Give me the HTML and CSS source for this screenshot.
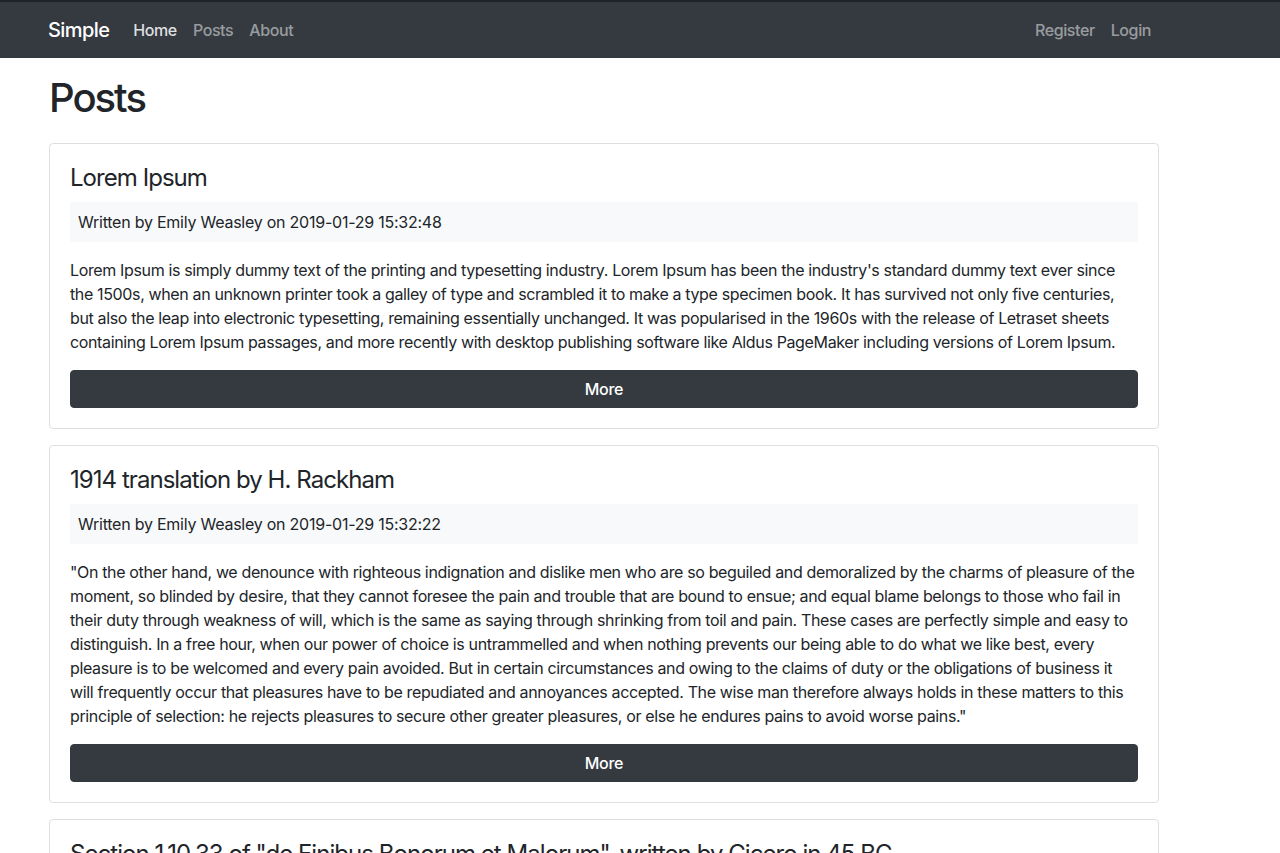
FILE: index.html
```html
<!DOCTYPE html>
<html lang="en">
<head>
<meta charset="utf-8">
<title>Simple</title>
<link rel="stylesheet" href="styles.css">
</head>
<body>
<nav class="navbar">
  <div class="nav-inner">
    <a class="brand" href="#">Simple</a>
    <ul class="nav-list">
      <li><a class="nav-link active" href="#">Home</a></li>
      <li><a class="nav-link" href="#">Posts</a></li>
      <li><a class="nav-link" href="#">About</a></li>
    </ul>
    <ul class="nav-list nav-right">
      <li><a class="nav-link" href="#">Register</a></li>
      <li><a class="nav-link" href="#">Login</a></li>
    </ul>
  </div>
</nav>
<main class="container">
  <h1 class="page-title">Posts</h1>

  <article class="card">
    <h4 class="card-title">Lorem Ipsum</h4>
    <div class="meta">Written by Emily Weasley on 2019-01-29 15:32:48</div>
    <p class="card-text">Lorem Ipsum is simply dummy text of the printing and typesetting industry. Lorem Ipsum has been the industry's standard dummy text ever since the 1500s, when an unknown printer took a galley of type and scrambled it to make a type specimen book. It has survived not only five centuries, but also the leap into electronic typesetting, remaining essentially unchanged. It was popularised in the 1960s with the release of Letraset sheets containing Lorem Ipsum passages, and more recently with desktop publishing software like Aldus PageMaker including versions of Lorem Ipsum.</p>
    <a class="btn" href="#">More</a>
  </article>

  <article class="card">
    <h4 class="card-title">1914 translation by H. Rackham</h4>
    <div class="meta">Written by Emily Weasley on 2019-01-29 15:32:22</div>
    <p class="card-text">"On the other hand, we denounce with righteous indignation and dislike men who are so beguiled and demoralized by the charms of pleasure of the moment, so blinded by desire, that they cannot foresee the pain and trouble that are bound to ensue; and equal blame belongs to those who fail in their duty through weakness of will, which is the same as saying through shrinking from toil and pain. These cases are perfectly simple and easy to distinguish. In a free hour, when our power of choice is untrammelled and when nothing prevents our being able to do what we like best, every pleasure is to be welcomed and every pain avoided. But in certain circumstances and owing to the claims of duty or the obligations of business it will frequently occur that pleasures have to be repudiated and annoyances accepted. The wise man therefore always holds in these matters to this principle of selection: he rejects pleasures to secure other greater pleasures, or else he endures pains to avoid worse pains."</p>
    <a class="btn" href="#">More</a>
  </article>

  <article class="card">
    <h4 class="card-title">Section 1.10.33 of "de Finibus Bonorum et Malorum", written by Cicero in 45 BC</h4>
    <div class="meta">Written by Emily Weasley on 2019-01-29 15:31:57</div>
    <p class="card-text">"At vero eos et accusamus et iusto odio dignissimos ducimus qui blanditiis praesentium voluptatum deleniti atque corrupti quos dolores et quas molestias excepturi sint occaecati cupiditate non provident, similique sunt in culpa qui officia deserunt mollitia animi, id est laborum et dolorum fuga."</p>
    <a class="btn" href="#">More</a>
  </article>
</main>
</body>
</html>
```

FILE: styles.css
```css
* {
  box-sizing: border-box;
}

html, body {
  margin: 0;
  padding: 0;
}

body {
  font-family: Inter, "Liberation Sans", Arial, sans-serif;
  font-size: 16px;
  line-height: 1.5;
  color: #212529;
  background: #fff;
  letter-spacing: -0.3px;
}

a {
  text-decoration: none;
}

.navbar {
  background: #343a40;
  border-top: 2px solid #1f2226;
}

.nav-inner {
  width: 1111px;
  margin-left: 48px;
  height: 56px;
  display: flex;
  align-items: center;
}

.brand {
  color: #fff;
  font-size: 20px;
  line-height: 30px;
  font-weight: 500;
  margin-right: 16px;
  letter-spacing: -0.6px;
}

.nav-list {
  list-style: none;
  margin: 0;
  padding: 0;
  display: flex;
}

.nav-right {
  margin-left: auto;
}

.nav-link {
  display: block;
  padding: 8px;
  color: rgba(255, 255, 255, 0.5);
  font-weight: 500;
  letter-spacing: -0.4px;
}

.nav-link.active {
  color: rgba(255, 255, 255, 0.85);
}

.container {
  width: 1110px;
  margin-left: 49px;
}

.page-title {
  font-size: 40px;
  font-weight: 500;
  line-height: 1.2;
  margin: 16px 0 21px;
  letter-spacing: -2px;
}

.card {
  border: 1px solid rgba(0, 0, 0, 0.125);
  border-radius: 4px;
  padding: 20px;
  margin-bottom: 16px;
  display: flex;
  flex-direction: column;
}

.card-title {
  font-size: 24px;
  font-weight: 400;
  line-height: 1.2;
  margin: 0 0 9px;
  letter-spacing: -0.95px;
}

.meta {
  background: #f8f9fa;
  padding: 8px;
  letter-spacing: -0.24px;
}

.card-text {
  margin: 16px 0;
  letter-spacing: -0.36px;
}

.btn {
  display: block;
  background: #343a40;
  border: 1px solid #343a40;
  color: #fff;
  text-align: center;
  padding: 6px 12px;
  border-radius: 4px;
  font-weight: 500;
}
```
